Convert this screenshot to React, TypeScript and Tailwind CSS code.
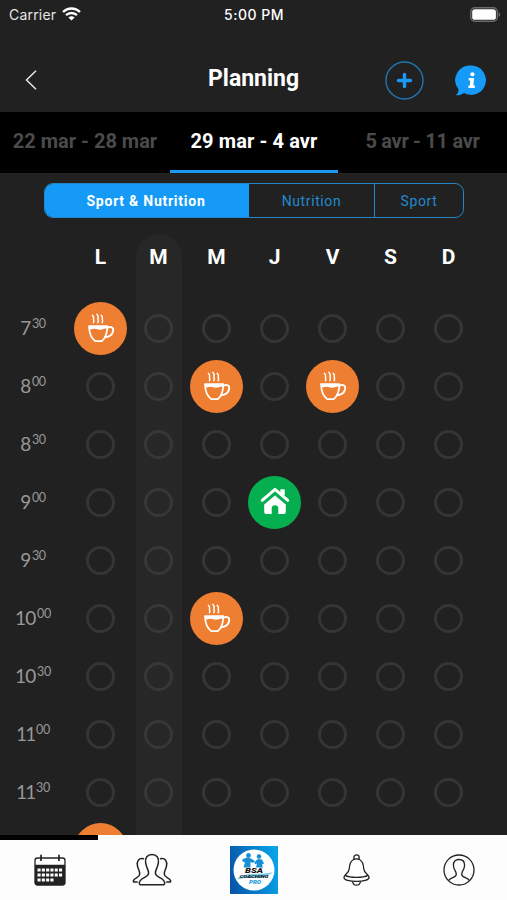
import React from "react";

type SlotKind = "meal" | "home";

interface ITimeRow {
  hour: string;
  minutes: string;
  events: Record<number, SlotKind>;
}

const DAYS = ["L", "M", "M", "J", "V", "S", "D"];
const TODAY = 1;

const ROWS: ITimeRow[] = [
  { hour: "7", minutes: "30", events: { 0: "meal" } },
  { hour: "8", minutes: "00", events: { 2: "meal", 4: "meal" } },
  { hour: "8", minutes: "30", events: {} },
  { hour: "9", minutes: "00", events: { 3: "home" } },
  { hour: "9", minutes: "30", events: {} },
  { hour: "10", minutes: "00", events: { 2: "meal" } },
  { hour: "10", minutes: "30", events: {} },
  { hour: "11", minutes: "00", events: {} },
  { hour: "11", minutes: "30", events: {} },
];

const CupIcon = () => (
  <svg width="28" height="30" viewBox="0 0 28 30" fill="none" stroke="white" strokeLinecap="round">
    <path
      d="M5.4 2.400c2.600 1.800.4 3.200 1.200 4.400.4.800.4 1.600-.2 2.800M9.800 1.200c2.800 2.400.4 4 1.300 5.400.5.900.4 1.800-.3 3M14.200 2.400c2.600 1.800.4 3.200 1.200 4.400.4.800.4 1.600-.2 2.800"
      strokeWidth="1.500"
    />
    <path d="M2 13h18.200c.3 6.400-1.300 11.500-5.400 15.200H8.400C3.900 25 2.100 19.500 2 13Z" strokeWidth="1.700" strokeLinejoin="round" />
    <path d="M2.300 13h17.700l-.5 2.600c-2.800-.6-5 2-8.300.9-2.800-.9-4.900-1-7.800.3Z" fill="white" stroke="none" />
    <path d="M20.200 14.800c3.700-1.600 6.400-.5 6 2.600-.5 4.100-3.900 6.600-8.300 7" strokeWidth="1.900" />
  </svg>
);

const HomeIcon = () => (
  <svg width="30" height="28" viewBox="0 0 30 28" fill="none">
    <path d="M20.500 2.500h4v8l-4-3.700Z" fill="white" />
    <path d="M15 8.500 25.800 17.500V25a2 2 0 0 1-2 2h-5.500v-5.500a3.300 3.300 0 0 0-6.600 0V27H6.200a2 2 0 0 1-2-2v-7.500Z" fill="white" />
    <path d="m2.200 13.400 12.800-11 12.800 11" stroke="#05af50" strokeWidth="5" strokeLinecap="round" transform="translate(0 .8)" />
    <path d="m2.200 13.400 12.800-11 12.800 11" stroke="white" strokeWidth="2.900" strokeLinecap="round" strokeLinejoin="round" />
    <path d="M20.500 2.500h4v6h-4Z" fill="white" />
  </svg>
);

const Slot: React.FC<{ kind?: SlotKind; today: boolean }> = ({ kind, today }) => {
  if (kind === "meal") {
    return (
      <div className="flex h-[53px] w-[53px] items-center justify-center rounded-full bg-[#ee7e31]">
        <CupIcon />
      </div>
    );
  }
  if (kind === "home") {
    return (
      <div className="flex h-[53px] w-[53px] items-center justify-center rounded-full bg-[#05af50] pb-[2px]">
        <HomeIcon />
      </div>
    );
  }
  return (
    <div
      className={`h-[29px] w-[29px] rounded-full border-[3px] ${today ? "border-[#373737]" : "border-[#353535]"}`}
    />
  );
};

const StatusBar = () => (
  <div className="grid h-7 grid-cols-3 items-center pl-[9px] pr-[6px] font-['Inter',sans-serif] text-[14px] text-[#e6e6e6]">
    <div className="flex items-center gap-[6px]">
      <span className="tracking-[0.2px]">Carrier</span>
      <svg width="19" height="14" viewBox="0 0 19 14" fill="none" stroke="white">
        <path d="M1 5a12.200 12.200 0 0 1 17 0" strokeWidth="2.400" />
        <path d="M4 8.200a8 8 0 0 1 11 0" strokeWidth="2.300" />
        <path d="M9.500 13.600 6.400 10.600a4.500 4.500 0 0 1 6.200 0Z" fill="white" stroke="none" />
      </svg>
    </div>
    <span className="pr-[2px] text-center font-medium tracking-[0.5px] text-white">5:00 PM</span>
    <svg className="justify-self-end" width="31" height="15" viewBox="0 0 31 15">
      <rect x=".8" y=".8" width="26.500" height="13.400" rx="4" fill="none" stroke="#6b6b6b" strokeWidth="1.400" />
      <rect x="2.200" y="2.200" width="23.700" height="10.600" rx="2.600" fill="white" />
      <path d="M28.700 5.200c2 .7 2 3.900 0 4.600Z" fill="#6b6b6b" />
    </svg>
  </div>
);

const Header = () => (
  <div className="flex h-[84px] items-center pl-[25px] pr-5 pt-5">
    <svg width="12" height="20" viewBox="0 0 12 20" fill="none" stroke="#e5e5e5" strokeWidth="1.500">
      <path d="M11 .8 1.500 10 11 19.200" />
    </svg>
    <h1 className="-mt-[2px] ml-[171px] w-[94px] whitespace-nowrap text-[23px] font-bold leading-7 text-white">
      Planning
    </h1>
    <div className="ml-auto flex items-center gap-[31px]">
      <svg width="39" height="39" viewBox="0 0 39 39" fill="none" stroke="#1b9af5">
        <circle cx="19.500" cy="19.500" r="18.500" stroke="#2375b0" strokeWidth="1.400" />
        <path d="M19.500 13.500v12M13.500 19.500h12" strokeWidth="3.400" strokeLinecap="round" />
      </svg>
      <svg width="32" height="31" viewBox="0 0 32 31">
        <path
          d="M16.500.5a14.700 14.700 0 1 1-7.500 27.500C6.500 30 3.500 30.600.8 30.300c1.800-1.500 2.700-3.500 2.700-6A14.700 14.700 0 0 1 16.500.5Z"
          fill="#159bf7"
        />
        <circle cx="17.400" cy="9.300" r="2.100" fill="white" />
        <path d="M13.800 13h5.300l-.7 7.400h1.500l-.2 2.500h-6.400l.3-2.500h1.300l.4-4.900h-1.700Z" fill="white" />
      </svg>
    </div>
  </div>
);

const WeekTabs = () => (
  <div className="grid h-[61px] grid-cols-[170px_168px_169px] whitespace-nowrap bg-black text-center text-[20px] font-bold leading-[58px]">
    <span className="text-[#4b4b4b]">22 mar - 28 mar</span>
    <span className="h-[61px] border-b-[3px] border-[#1b9af5] tracking-[0.1px] text-white">29 mar - 4 avr</span>
    <span className="tracking-[-0.3px] text-[#4b4b4b]">5 avr - 11 avr</span>
  </div>
);

const Filters = () => (
  <div className="ml-11 mt-[10px] flex h-[35px] w-[420px] overflow-hidden rounded-[9px] border border-[#2585c7] text-[14px] leading-[34px] tracking-[0.6px] text-[#2189cf]">
    <span className="w-[204px] bg-[#159bf7] pr-[2px] text-center font-bold tracking-[0.75px] text-white">
      Sport &amp; Nutrition
    </span>
    <span className="w-[126px] border-r border-[#2585c7] text-center">Nutrition</span>
    <span className="flex-1 text-center">Sport</span>
  </div>
);

const Planning = () => (
  <div className="mt-4 flex h-[601px] overflow-hidden">
    <div className="w-[71.5px] shrink-0 pt-[65px]">
      {ROWS.map((row) => (
        <div
          key={row.hour + row.minutes}
          className="flex h-[58px] w-[66px] items-center justify-center font-['Lato',sans-serif] text-[#989898]"
        >
          <span className={row.hour === "11" ? "text-[19px] tracking-[-1.8px]" : "text-[19px] tracking-[-0.8px]"}>
            {row.hour}
          </span>
          <span className="mb-[7px] ml-[1.5px] text-[12.5px] tracking-[-0.3px]">{row.minutes}</span>
        </div>
      ))}
    </div>
    {DAYS.map((day, index) => (
      <div key={index} className="flex w-[58px] shrink-0 justify-center">
        <div className={`flex w-[46px] flex-col items-center rounded-t-[23px] ${index === TODAY ? "bg-[#272727]" : ""}`}>
          <div className="h-[65px] shrink-0 text-[21px] font-bold leading-[47px] text-white">{day}</div>
          {ROWS.map((row) => (
            <div key={row.hour + row.minutes} className="flex h-[58px] w-[58px] shrink-0 items-center justify-center">
              <Slot kind={row.events[index]} today={index === TODAY} />
            </div>
          ))}
          {/* next row, only its top edge shows above the tab bar */}
          {index === 0 && (
            <div className="flex h-14 w-[58px] shrink-0 items-center justify-center">
              <Slot kind="meal" today={false} />
            </div>
          )}
        </div>
      </div>
    ))}
  </div>
);

const CalendarIcon = () => (
  <svg width="32" height="32" viewBox="0 0 32 32">
    <rect x="1" y="4" width="30" height="27" rx="2.500" fill="white" stroke="#222" strokeWidth="1.300" />
    <path d="M1 10.800h30V29a2 2 0 0 1-2 2H3a2 2 0 0 1-2-2Z" fill="#222" />
    <path d="M7 .8v6.200M25 .8v6.200" stroke="#222" strokeWidth="1.700" />
    <path d="M3.500 16h24.800M3.500 21h24.800M3.500 26h16.400" stroke="white" strokeWidth="3" strokeDasharray="3.100 1.200" />
  </svg>
);

const GroupIcon = () => (
  <svg width="40" height="34" viewBox="0 0 40 34" fill="none" stroke="#222" strokeWidth="1.500" strokeLinecap="round" strokeLinejoin="round">
    <path d="M20 1.500c-4.800 0-7 3.200-6.400 8.200.5 4.700 3 6.800 3 10.300 0 5-8.600 4.300-9.300 9.800-.1 1 .2 1.700 1 2h23.400c.8-.3 1.100-1 1-2-.7-5.500-9.300-4.800-9.300-9.800 0-3.500 2.500-5.600 3-10.300.6-5-1.600-8.200-6.400-8.200Z" />
    <path d="M11.500 5.700c-4.800-.9-7 2.500-6 7.500.6 3 2.400 4.500 2.200 8-.3 3.600-5.600 3.700-6.400 6.800-.1.800.4 1.100 1.200 1.100h2.700" />
    <path d="M28.500 5.700c4.800-.9 7 2.500 6 7.500-.6 3-2.400 4.500-2.200 8 .3 3.600 5.600 3.700 6.400 6.800.1.800-.4 1.100-1.200 1.100h-2.700" />
  </svg>
);

const BellIcon = () => (
  <svg width="27" height="32" viewBox="0 0 27 32" fill="none" stroke="#222" strokeWidth="1.300" strokeLinejoin="round">
    <circle cx="13.500" cy="3.500" r="2.700" />
    <path
      d="M10.500 5.500c-3 1.500-4 5-4.300 9.500-.2 4-4.800 5.500-5.200 8.200-.2 2.900 6 4.200 12.500 4.200S26.200 26.100 26 23.200c-.4-2.700-5-4.200-5.200-8.200-.3-4.500-1.300-8-4.300-9.500-1.800-.8-4.200-.8-6 0Z"
      fill="white"
    />
    <path d="M2 21.400c5 2.600 18 2.600 23 0M9.500 27.200c.3 2.700 1.500 4 4 4s3.700-1.300 4-4" />
  </svg>
);

const ProfileIcon = () => (
  <svg width="32" height="32" viewBox="0 0 32 32" fill="none" stroke="#222" strokeWidth="1.300">
    <circle cx="16" cy="16" r="15" />
    <path d="M5.500 26.600c2-3.300 7.800-2.900 7.800-6.400 0-3.400-2.900-4.500-2.900-8.900 0-4 1.900-5.800 5.600-5.800s5.600 1.800 5.600 5.800c0 4.400-2.900 5.500-2.900 8.900 0 3.500 5.800 3.100 7.800 6.400" />
  </svg>
);

const Logo = () => (
  <svg width="48" height="48" viewBox="0 0 48 48">
    <defs>
      <linearGradient id="logo-bg" x1="0" y1=".5" x2="1" y2=".3">
        <stop offset="0" stopColor="#0758ab" />
        <stop offset="1" stopColor="#08a4e8" />
      </linearGradient>
    </defs>
    <path d="M0 0h48v48H0Z" fill="url(#logo-bg)" />
    <circle cx="24" cy="24" r="20.500" fill="white" />
    <g fill="#168fd6">
      <circle cx="18.500" cy="9.500" r="2.400" />
      <path d="m13 13 4-1.500 4 1 4 2.500-2 2-2.500-1v5.500h-7l1.500-5-3-1.500Z" />
      <circle cx="29" cy="10.500" r="2.300" />
      <path d="m25 15.500 3-2.500 4 .5 2 4-2 1 1 3h-7l1-4-2.500 1Z" />
    </g>
    <path d="M7 33.500c3-4 9-5.500 16-5.500s15-.5 20-2c-5 4.500-10 6-17 6S13 31.500 7 33.500Z" fill="#7acbed" />
    <g textAnchor="middle" fontFamily="Roboto, sans-serif" fontWeight="900" fontStyle="italic">
      <text x="24" y="26.800" fontSize="6.500" fill="#151515" textLength="18" lengthAdjust="spacingAndGlyphs">BSA</text>
      <text x="24" y="32.300" fontSize="4" fill="#151515" textLength="29" lengthAdjust="spacingAndGlyphs">COACHING</text>
      <text x="25" y="37.800" fontSize="4.500" fill="#1599d8" textLength="12" lengthAdjust="spacingAndGlyphs">PRO</text>
    </g>
  </svg>
);

const TabBar = () => (
  <div className="h-[65px] bg-[#fdfdfd]">
    <div className="h-[5px] w-[98px] bg-black" />
    <div className="grid h-[60px] grid-cols-[99px_106px_97px_108px_97px] items-center justify-items-center">
      <CalendarIcon />
      <GroupIcon />
      <Logo />
      <BellIcon />
      <ProfileIcon />
    </div>
  </div>
);

const App: React.FC = () => {
  return (
    <div className="h-[900px] w-[507px] overflow-hidden bg-[#212121] font-['Roboto',sans-serif]">
      <StatusBar />
      <Header />
      <WeekTabs />
      <Filters />
      <Planning />
      <TabBar />
    </div>
  );
};

export default App;
